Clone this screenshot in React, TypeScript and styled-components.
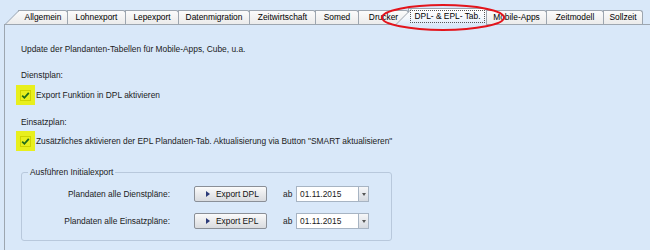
import React from 'react'
import styled, { createGlobalStyle } from 'styled-components'

const GlobalStyle = createGlobalStyle`
  html, body {
    margin: 0;
    padding: 0;
    background: #d9e8f9;
  }
  body {
    font-family: 'Liberation Sans', Arial, sans-serif;
    font-size: 8.4px;
    color: #1b1b1b;
  }
`

const Screen = styled.div`
  position: relative;
  width: 650px;
  height: 250px;
  overflow: hidden;
  background: #d9e8f9;
`

const TabStrip = styled.div`
  display: flex;
  align-items: flex-end;
  height: 24px;
  padding-left: 19px;
`

const tabFill = (active?: boolean) =>
  active ? 'linear-gradient(#ffffff, #f3f7fc 60%, #d9e8f9)' : 'linear-gradient(#fbfbfb, #ebebeb)'

const Tab = styled.div<{ $width: number; $active?: boolean; $slant?: boolean }>`
  position: relative;
  z-index: ${(p) => (p.$active ? 2 : 0)};
  box-sizing: border-box;
  width: ${(p) => p.$width + 1}px;
  height: ${(p) => (p.$active ? 17 : 14)}px;
  margin-left: -1px;
  margin-bottom: ${(p) => (p.$active ? -1 : 0)}px;
  display: flex;
  align-items: center;
  justify-content: center;
  border: 1px solid #9da6b0;
  border-bottom: none;
  border-radius: 0 3px 0 0;
  background: ${(p) => tabFill(p.$active)};
  color: #000;
  white-space: nowrap;
  padding-bottom: ${(p) => (p.$active ? 1 : 0)}px;

  ${(p) =>
    p.$slant &&
    `
    &::before {
      content: '';
      position: absolute;
      z-index: -1;
      left: -14px;
      top: -1px;
      bottom: 0;
      width: 15px;
      border-left: 1px solid #9da6b0;
      border-top: 1px solid #9da6b0;
      background: ${tabFill(p.$active)};
      transform-origin: bottom left;
      transform: skewX(-45deg);
    }
  `}
`

const TabLabel = styled.span<{ $focus?: boolean }>`
  position: relative;
  padding: 1px 4px;
  line-height: 9px;
  border: 1px dotted ${(p) => (p.$focus ? '#555' : 'transparent')};
`

const Annotation = styled.svg`
  position: absolute;
  left: 378px;
  top: 2px;
  pointer-events: none;
  z-index: 5;
`

const Panel = styled.div`
  margin-left: 4px;
  height: 226px;
  border-left: 1px solid #9da6b0;
  border-top: 1px solid #9da6b0;
  padding: 17px 0 0 16px;
  display: flex;
  flex-direction: column;
  align-items: flex-start;
`

const Line = styled.div<{ $gap?: number }>`
  line-height: 14px;
  margin-top: ${(p) => p.$gap ?? 0}px;
  white-space: nowrap;
`

const CheckRow = styled.label<{ $gap?: number }>`
  display: flex;
  align-items: center;
  height: 20px;
  margin-top: ${(p) => p.$gap ?? 0}px;
  margin-left: -5px;
  white-space: nowrap;
`

const Highlight = styled.span`
  width: 19px;
  height: 20px;
  margin-right: 1px;
  background: #e8ef1d;
  display: flex;
  align-items: center;
  justify-content: center;
`

const CheckBox = styled.span`
  box-sizing: border-box;
  width: 11px;
  height: 11px;
  border: 1px solid #cfd400;
  display: flex;
  align-items: center;
  justify-content: center;
`

const GroupBox = styled.fieldset`
  box-sizing: border-box;
  width: 371px;
  margin: 15px 0 0 0;
  padding: 7px 0 11px 0;
  border: 1px solid #b8c8dc;
  border-radius: 3px;
  min-width: 0;
`

const Legend = styled.legend`
  margin-left: 6px;
  padding: 0 2px;
  line-height: 13px;
`

const ExportRow = styled.div<{ $gap?: number }>`
  display: flex;
  align-items: center;
  height: 16px;
  margin-top: ${(p) => p.$gap ?? 0}px;
`

const RowLabel = styled.span`
  width: 148px;
  text-align: right;
  white-space: nowrap;
`

const Button = styled.button`
  box-sizing: border-box;
  width: 73px;
  height: 16px;
  margin-left: 24px;
  padding: 0 0 0 11px;
  display: flex;
  align-items: center;
  gap: 6px;
  border: 1px solid #8a8f97;
  border-radius: 2px;
  background: linear-gradient(#fbfbfb, #e9eaec 50%, #d9dbdf);
  font: inherit;
  color: #111;
  white-space: nowrap;
`

const Arrow = styled.span`
  width: 0;
  height: 0;
  border-top: 3.5px solid transparent;
  border-bottom: 3.5px solid transparent;
  border-left: 4px solid #2b3a78;
`

const Ab = styled.span`
  margin-left: 16px;
  width: 13px;
`

const DateBox = styled.div`
  display: flex;
  height: 16px;
`

const DateInput = styled.span`
  box-sizing: border-box;
  width: 62px;
  height: 16px;
  padding-left: 3px;
  line-height: 14px;
  background: #fff;
  border: 1px solid #a7b4c3;
  border-right: none;
`

const DropButton = styled.span`
  box-sizing: border-box;
  width: 11px;
  height: 16px;
  border: 1px solid #a7b4c3;
  background: linear-gradient(#f6f7f9, #d6dae0);
  display: flex;
  align-items: center;
  justify-content: center;

  &::after {
    content: '';
    border-left: 2.5px solid transparent;
    border-right: 2.5px solid transparent;
    border-top: 3px solid #555;
  }
`

const tabs = [
  { label: 'Allgemein', width: 49, slant: true },
  { label: 'Lohnexport', width: 58 },
  { label: 'Lepexport', width: 53 },
  { label: 'Datenmigration', width: 71 },
  { label: 'Zeitwirtschaft', width: 66 },
  { label: 'Somed', width: 43 },
  { label: 'Drucker', width: 50 },
  { label: 'DPL- & EPL- Tab.', width: 78, active: true, slant: true },
  { label: 'Mobile-Apps', width: 60 },
  { label: 'Zeitmodell', width: 57 },
  { label: 'Sollzeit', width: 39 },
]

const Check = () => (
  <Highlight>
    <CheckBox>
      <svg width="9" height="9" viewBox="0 0 9 9">
        <path d="M1.2 4.6 L3.4 6.8 L7.8 1.8" fill="none" stroke="#1f6b1a" strokeWidth="1.8" />
      </svg>
    </CheckBox>
  </Highlight>
)

const Export = ({ label, button, date, gap }: { label: string; button: string; date: string; gap?: number }) => (
  <ExportRow $gap={gap}>
    <RowLabel>{label}</RowLabel>
    <Button>
      <Arrow />
      {button}
    </Button>
    <Ab>ab</Ab>
    <DateBox>
      <DateInput>{date}</DateInput>
      <DropButton />
    </DateBox>
  </ExportRow>
)

const App = () => {
  return (
    <Screen>
      <GlobalStyle />
      <TabStrip>
        {tabs.map((t) => (
          <Tab key={t.label} $width={t.width} $active={t.active} $slant={t.slant}>
            <TabLabel $focus={t.active}>{t.label}</TabLabel>
          </Tab>
        ))}
      </TabStrip>
      <Annotation width="130" height="32" viewBox="0 0 130 32">
        <ellipse cx="65" cy="15.5" rx="61" ry="12.5" fill="none" stroke="#e3141c" strokeWidth="2" />
      </Annotation>
      <Panel>
        <Line>Update der Plandanten-Tabellen für Mobile-Apps, Cube, u.a.</Line>
        <Line $gap={12}>Dienstplan:</Line>
        <CheckRow $gap={3}>
          <Check />
          Export Funktion in DPL aktivieren
        </CheckRow>
        <Line $gap={10}>Einsatzplan:</Line>
        <CheckRow $gap={2}>
          <Check />
          Zusätzliches aktivieren der EPL Plandaten-Tab. Aktualisierung via Button "SMART aktualisieren"
        </CheckRow>
        <GroupBox>
          <Legend>Ausführen Initialexport</Legend>
          <Export label="Plandaten alle Dienstpläne:" button="Export DPL" date="01.11.2015" />
          <Export label="Plandaten alle Einsatzpläne:" button="Export EPL" date="01.11.2015" gap={11} />
        </GroupBox>
      </Panel>
    </Screen>
  )
}

export default App
